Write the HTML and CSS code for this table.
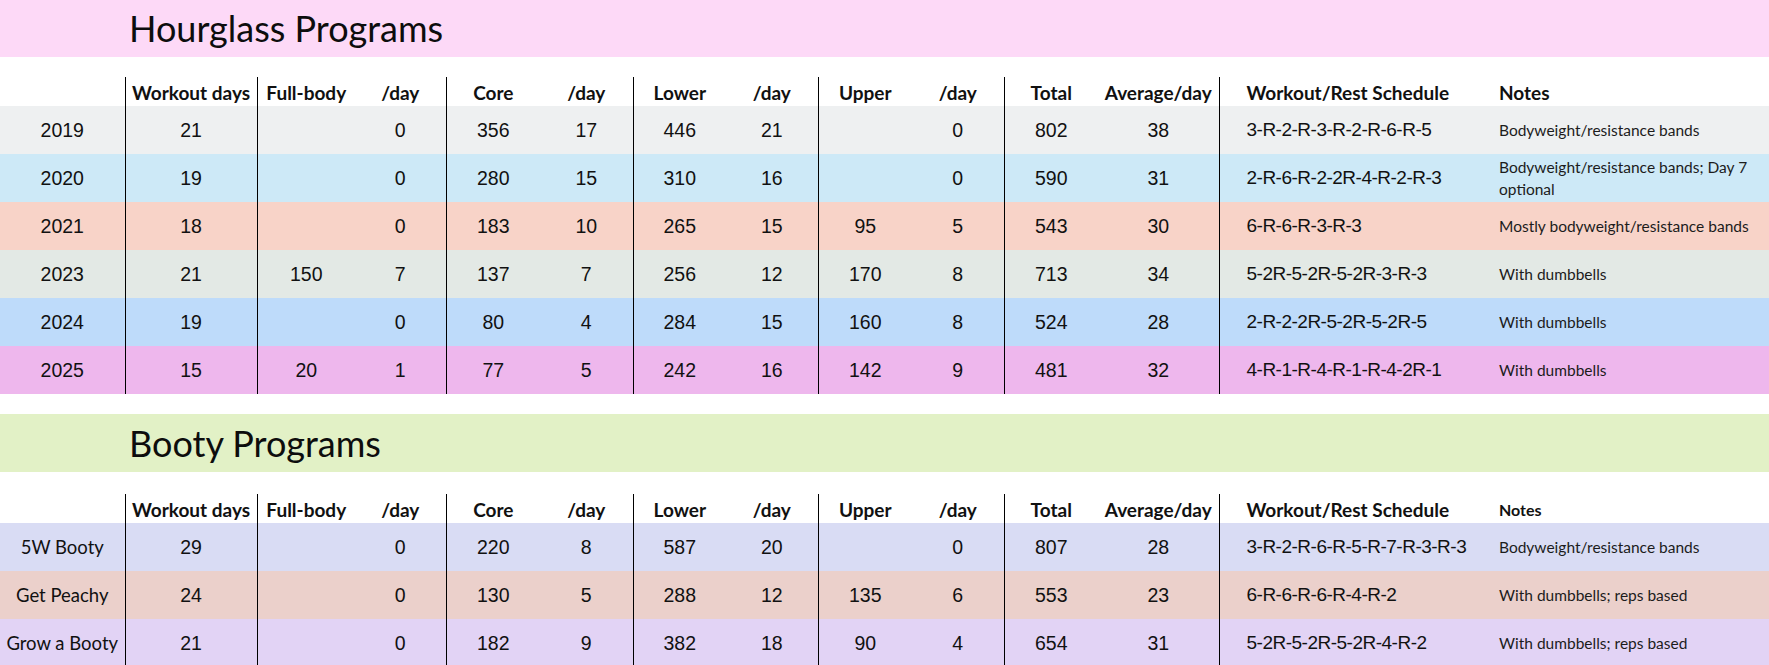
FILE: index.html
```html
<!DOCTYPE html>
<html lang="en">
<head>
<meta charset="utf-8">
<title>Programs</title>
<link rel="stylesheet" href="styles.css">
</head>
<body>
<section class="program program-first">
  <div class="band band-pink"><h1 class="title">Hourglass Programs</h1></div>
  <table class="grid">
    <colgroup>
      <col class="c-label"><col class="c-days"><col class="c-full"><col class="c-fday">
      <col class="c-core"><col class="c-cday"><col class="c-lower"><col class="c-lday">
      <col class="c-upper"><col class="c-uday"><col class="c-total"><col class="c-avg">
      <col class="c-sched"><col class="c-notes">
    </colgroup>
    <thead>
      <tr>
        <th></th><th class="sep">Workout days</th><th class="sep">Full-body</th><th>/day</th>
        <th class="sep">Core</th><th>/day</th><th class="sep">Lower</th><th>/day</th>
        <th class="sep">Upper</th><th>/day</th><th class="sep">Total</th><th>Average/day</th>
        <th class="sep left sched-h">Workout/Rest Schedule</th><th class="left notes-h">Notes</th>
      </tr>
    </thead>
    <tbody>
      <tr class="r-grey">
        <td class="year">2019</td><td class="sep">21</td><td class="sep"></td><td>0</td>
        <td class="sep">356</td><td>17</td><td class="sep">446</td><td>21</td>
        <td class="sep"></td><td>0</td><td class="sep">802</td><td>38</td>
        <td class="sep sched">3-R-2-R-3-R-2-R-6-R-5</td><td class="notes">Bodyweight/resistance bands</td>
      </tr>
      <tr class="r-sky">
        <td class="year">2020</td><td class="sep">19</td><td class="sep"></td><td>0</td>
        <td class="sep">280</td><td>15</td><td class="sep">310</td><td>16</td>
        <td class="sep"></td><td>0</td><td class="sep">590</td><td>31</td>
        <td class="sep sched">2-R-6-R-2-2R-4-R-2-R-3</td><td class="notes">Bodyweight/resistance bands; Day 7 optional</td>
      </tr>
      <tr class="r-salmon">
        <td class="year">2021</td><td class="sep">18</td><td class="sep"></td><td>0</td>
        <td class="sep">183</td><td>10</td><td class="sep">265</td><td>15</td>
        <td class="sep">95</td><td>5</td><td class="sep">543</td><td>30</td>
        <td class="sep sched">6-R-6-R-3-R-3</td><td class="notes">Mostly bodyweight/resistance bands</td>
      </tr>
      <tr class="r-sage">
        <td class="year">2023</td><td class="sep">21</td><td class="sep">150</td><td>7</td>
        <td class="sep">137</td><td>7</td><td class="sep">256</td><td>12</td>
        <td class="sep">170</td><td>8</td><td class="sep">713</td><td>34</td>
        <td class="sep sched">5-2R-5-2R-5-2R-3-R-3</td><td class="notes">With dumbbells</td>
      </tr>
      <tr class="r-blue">
        <td class="year">2024</td><td class="sep">19</td><td class="sep"></td><td>0</td>
        <td class="sep">80</td><td>4</td><td class="sep">284</td><td>15</td>
        <td class="sep">160</td><td>8</td><td class="sep">524</td><td>28</td>
        <td class="sep sched">2-R-2-2R-5-2R-5-2R-5</td><td class="notes">With dumbbells</td>
      </tr>
      <tr class="r-orchid">
        <td class="year">2025</td><td class="sep">15</td><td class="sep">20</td><td>1</td>
        <td class="sep">77</td><td>5</td><td class="sep">242</td><td>16</td>
        <td class="sep">142</td><td>9</td><td class="sep">481</td><td>32</td>
        <td class="sep sched">4-R-1-R-4-R-1-R-4-2R-1</td><td class="notes">With dumbbells</td>
      </tr>
    </tbody>
  </table>
</section>

<section class="program program-next">
  <div class="band band-green"><h1 class="title">Booty Programs</h1></div>
  <table class="grid">
    <colgroup>
      <col class="c-label"><col class="c-days"><col class="c-full"><col class="c-fday">
      <col class="c-core"><col class="c-cday"><col class="c-lower"><col class="c-lday">
      <col class="c-upper"><col class="c-uday"><col class="c-total"><col class="c-avg">
      <col class="c-sched"><col class="c-notes">
    </colgroup>
    <thead>
      <tr>
        <th></th><th class="sep">Workout days</th><th class="sep">Full-body</th><th>/day</th>
        <th class="sep">Core</th><th>/day</th><th class="sep">Lower</th><th>/day</th>
        <th class="sep">Upper</th><th>/day</th><th class="sep">Total</th><th>Average/day</th>
        <th class="sep left sched-h">Workout/Rest Schedule</th><th class="left notes-h notes-small">Notes</th>
      </tr>
    </thead>
    <tbody>
      <tr class="r-lavender">
        <td class="name">5W Booty</td><td class="sep">29</td><td class="sep"></td><td>0</td>
        <td class="sep">220</td><td>8</td><td class="sep">587</td><td>20</td>
        <td class="sep"></td><td>0</td><td class="sep">807</td><td>28</td>
        <td class="sep sched">3-R-2-R-6-R-5-R-7-R-3-R-3</td><td class="notes">Bodyweight/resistance bands</td>
      </tr>
      <tr class="r-peach">
        <td class="name">Get Peachy</td><td class="sep">24</td><td class="sep"></td><td>0</td>
        <td class="sep">130</td><td>5</td><td class="sep">288</td><td>12</td>
        <td class="sep">135</td><td>6</td><td class="sep">553</td><td>23</td>
        <td class="sep sched">6-R-6-R-6-R-4-R-2</td><td class="notes">With dumbbells; reps based</td>
      </tr>
      <tr class="r-lilac">
        <td class="name">Grow a Booty</td><td class="sep">21</td><td class="sep"></td><td>0</td>
        <td class="sep">182</td><td>9</td><td class="sep">382</td><td>18</td>
        <td class="sep">90</td><td>4</td><td class="sep">654</td><td>31</td>
        <td class="sep sched">5-2R-5-2R-5-2R-4-R-2</td><td class="notes">With dumbbells; reps based</td>
      </tr>
    </tbody>
  </table>
</section>
</body>
</html>
```

FILE: styles.css
```css
html, body {
  margin: 0;
  padding: 0;
  background: #ffffff;
}

body {
  width: 1769px;
  overflow: hidden;
  color: #111111;
  font-family: "Liberation Sans", Arial, sans-serif;
}

.program-first {
  margin-top: -1px;
}

.program-next {
  margin-top: 20px;
}

.band {
  height: 58px;
  display: flex;
  align-items: center;
  padding-left: 129px;
  box-sizing: border-box;
}

.band-pink { background: #fdd9f7; }
.band-green { background: #e2f1c6; }

.title {
  margin: 0;
  font-family: Lato, "Noto Sans", sans-serif;
  font-weight: 400;
  font-size: 36px;
  line-height: 44px;
  color: #0d0d0d;
}

.grid {
  width: 1769px;
  table-layout: fixed;
  border-collapse: collapse;
  margin-top: 20px;
}

.program-next .grid {
  margin-top: 22px;
}

.c-label { width: 125px; }
.c-days { width: 132px; }
.c-full { width: 98px; }
.c-fday { width: 91px; }
.c-core { width: 94px; }
.c-cday { width: 93px; }
.c-lower { width: 93px; }
.c-lday { width: 92px; }
.c-upper { width: 94px; }
.c-uday { width: 92px; }
.c-total { width: 94px; }
.c-avg { width: 121px; }
.c-sched { width: 271px; }
.c-notes { width: 279px; }

.grid th {
  height: 27px;
  padding: 0 0 2px;
  vertical-align: bottom;
  text-align: center;
  font-family: Lato, "Noto Sans", sans-serif;
  font-weight: 700;
  font-size: 19px;
  line-height: 23px;
  color: #111111;
  white-space: nowrap;
}

.grid td {
  height: 48px;
  padding: 0;
  text-align: center;
  vertical-align: middle;
  font-size: 19.5px;
  line-height: 22px;
  white-space: nowrap;
}

.grid .sep {
  border-left: 1px solid #000000;
}

.grid .left {
  text-align: left;
}

.grid .sched-h {
  padding-left: 27px;
}

.grid .notes-h {
  padding-left: 9px;
}

.grid .notes-small {
  font-size: 16px;
}

.grid td.sched {
  text-align: left;
  padding-left: 27px;
  font-size: 19px;
  letter-spacing: -0.5px;
}

.grid td.notes {
  text-align: left;
  padding-left: 9px;
  font-family: Lato, "Noto Sans", sans-serif;
  font-size: 15.5px;
  line-height: 22px;
  color: #1c1c1c;
  white-space: normal;
}

.grid td.name {
  font-family: Lato, "Noto Sans", sans-serif;
  font-size: 18.5px;
}

.r-grey { background: #eef0f1; }
.r-sky { background: #cde9f7; }
.r-salmon { background: #f8d3c8; }
.r-sage { background: #e3e9e5; }
.r-blue { background: #bedbfa; }
.r-orchid { background: #eeb7ed; }
.r-lavender { background: #d9dcf4; }
.r-peach { background: #ebd0cb; }
.r-lilac { background: #e2d3f5; }
```
